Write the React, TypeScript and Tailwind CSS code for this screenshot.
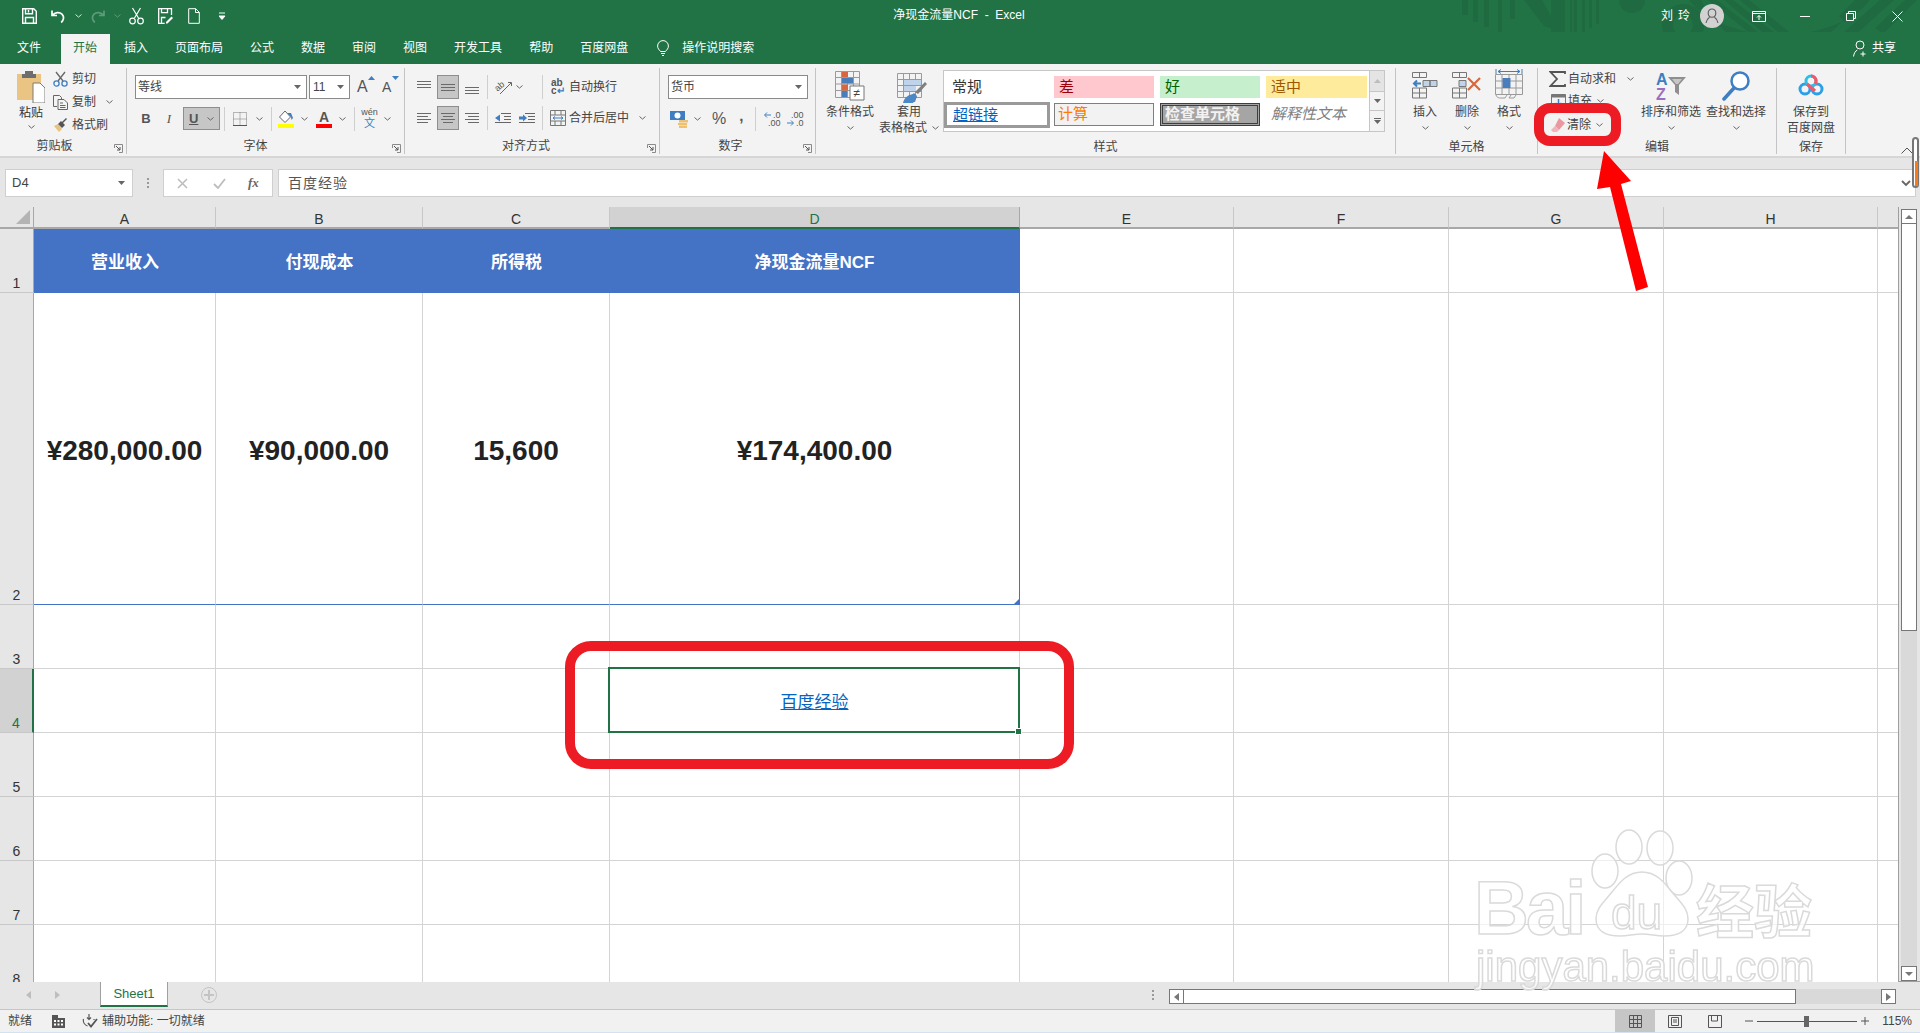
import React from 'react';

const Chev = ({ c = '#666' }: { c?: string }) => (
  <svg width="7" height="4" viewBox="0 0 7 4" className="shrink-0"><path d="M.5.5l3 2.6 3-2.6" fill="none" stroke={c} /></svg>
);

const Caret = () => (
  <svg width="7" height="4" viewBox="0 0 7 4" className="shrink-0"><path d="M0 0h7L3.5 4z" fill="#666" /></svg>
);

const Launcher = () => (
  <svg width="9" height="9" viewBox="0 0 9 9" className="absolute right-[3px] bottom-[1px]">
    <path d="M.5 4V.5h8v8H5" fill="none" stroke="#8a8a8a" />
    <path d="M2 2l4 4M6 3v3H3" fill="none" stroke="#555" />
  </svg>
);

const Sep = ({ cn = '' }: { cn?: string }) => <div className={`w-px h-[24px] bg-[#CFCFCF] shrink-0 ${cn}`} />;

// horizontal line icon for the align buttons
const Lines = ({ ys, short }: { ys: number[]; short?: 'l' | 'r' | 'c' }) => (
  <svg width="14" height="14" viewBox="0 0 14 14" className="shrink-0">
    {ys.map((y, i) => {
      const odd = short && i % 2 === 1;
      const x1 = odd && short === 'r' ? 3 : odd && short === 'c' ? 2 : 0;
      const x2 = odd && short === 'l' ? 11 : odd && short === 'c' ? 12 : 14;
      return <line key={y} x1={x1} x2={x2} y1={y + 0.5} y2={y + 0.5} stroke="#6a6a6a" />;
    })}
  </svg>
);

const Group = ({ w, label, launcher, lp = '', children }: { w: string; label: string; launcher?: boolean; lp?: string; children: React.ReactNode }) => (
  <div className={`relative flex flex-col shrink-0 h-[86px] mt-[4px] border-r border-[#C4C4C4] ${w}`}>
    <div className="h-[70px] relative">{children}</div>
    <div className={`h-[16px] leading-[16px] text-center text-[12px] text-[#444] mt-[3px] ${lp}`}>{label}</div>
    {launcher && <Launcher />}
  </div>
);

const BigBtn = ({ w, icon, lines, chev = true, cn = '' }: { w: string; icon: React.ReactNode; lines: string[]; chev?: boolean; cn?: string }) => (
  <div className={`flex flex-col items-center shrink-0 ${w} ${cn}`}>
    <div className="h-[34px] pt-[3px] flex items-start justify-center">{icon}</div>
    <div className="h-[16px] leading-[16px] text-[12px] text-[#444] whitespace-nowrap mt-[2px]">{lines[0]}</div>
    {lines[1] ? (
      <div className="h-[16px] leading-[16px] text-[12px] text-[#444] whitespace-nowrap">{lines[1]}</div>
    ) : (
      chev && <div className="h-[16px] flex items-center"><Chev /></div>
    )}
  </div>
);

const Combo = ({ w, text }: { w: string; text: string }) => (
  <div className={`h-[24px] bg-white border border-[#8A8A8A] flex items-center justify-between pl-[2px] pr-[5px] text-[12px] text-[#444] shrink-0 ${w}`}>
    <span>{text}</span>
    <Caret />
  </div>
);

const TitleBar = () => (
  <div className="relative h-[32px] bg-[#217346] flex items-center text-white shrink-0">
    <div className="flex items-center pl-[22px]">
      <svg width="15" height="16" viewBox="0 0 15 16"><path d="M.7.7h11l2.6 2.6v12H.7zM3.5.7v5h7v-5M3.5 15.3V9.5h8v5.8M6.5 2v2.5" fill="none" stroke="#fff" strokeWidth="1.4" /></svg>
      <svg width="16" height="15" viewBox="0 0 16 15" className="ml-[13px]"><path d="M2 1.5v5h5M2.3 6.3C5 3 9.5 2.7 12 5.2c2.5 2.6 1.8 6-.8 8.3" fill="none" stroke="#fff" strokeWidth="1.7" /></svg>
      <div className="ml-[9px]"><Chev c="#d6e6dc" /></div>
      <svg width="16" height="15" viewBox="0 0 16 15" className="ml-[8px]"><path d="M14 1.5v5H9M13.7 6.3C11 3 6.5 2.7 4 5.2c-2.5 2.6-1.8 6 .8 8.3" fill="none" stroke="#5f9b7a" strokeWidth="1.7" /></svg>
      <div className="ml-[8px]"><Chev c="#5f9b7a" /></div>
      <svg width="15" height="18" viewBox="0 0 15 18" className="ml-[8px]"><path d="M3.5 1l6 10M11.5 1l-6 10" stroke="#fff" strokeWidth="1.2" /><circle cx="3.5" cy="14" r="2.8" fill="none" stroke="#fff" strokeWidth="1.2" /><circle cx="11.5" cy="14" r="2.8" fill="none" stroke="#fff" strokeWidth="1.2" /></svg>
      <svg width="16" height="16" viewBox="0 0 16 16" className="ml-[14px]"><path d="M13.5 7V.7H.7v14.6h6M3.5.7v4h6v-4M3.5 15V9.5h4" fill="none" stroke="#fff" strokeWidth="1.3" /><path d="M8 14l5.5-5.5 1.5 1.5L9.500 15.500H8z" fill="#fff" /></svg>
      <svg width="12" height="16" viewBox="0 0 12 16" className="ml-[14px]"><path d="M.7.7h7l3.600 3.600v11H.7zM7.500.7v3.800h3.800" fill="none" stroke="#fff" /></svg>
      <svg width="7" height="8" viewBox="0 0 7 8" className="ml-[19px]"><path d="M0 1h6M0 4h6L3 7.500z" stroke="#fff" fill="#fff" /></svg>
    </div>
    <svg width="480" height="64" viewBox="0 0 480 64" className="absolute left-[1440px] top-0 pointer-events-none" fill="#1F6A40">
      <path d="M22 0h6v15h-6zM33 0h5v22h-5zM44 0h5v27h-5zM58 0h4v32h-4zM70 0h5v19h-5zM84 0h18l18 32-16-6zM111 0h14v36h-14zM130 0h2v36h-2zM134 0h3v35h-3zM142 0h3v32h-3zM149 0h3v28h-3zM156 0h3v24h-3z" />
      <circle cx="192" cy="0" r="13" />
      <path d="M243 4a21 21 0 1 0 .1 0zm0 11a10 10 0 1 1-.1 0z" fillRule="evenodd" />
      <path d="M245 0h12a85 85 0 0 0 155 0h14a100 61 0 0 1-181 0z" transform="translate(4 0)" />
      <path d="M268 0h9l56 44-9 0zM284 0h9l56 44-9 3zM300 0h9l50 40-8 3z" />
      <path d="M415 0h12l-22 22-6-6zM440 0h14l-42 38-8-6zM465 0h12l-34 34-8-6z" />
    </svg>
    <div className="absolute left-0 right-0 top-0 h-full flex items-center justify-center text-[12px] pb-[2px]">
      <span className="mr-[2px]">净现金流量NCF&nbsp; -&nbsp; Excel</span>
    </div>
    <div className="absolute right-0 top-0 h-full flex items-center">
      <span className="text-[12px] tracking-[5px] mr-[5px]">刘玲</span>
      <div className="w-[24px] h-[24px] rounded-full bg-[#D2D2D2] flex items-center justify-center">
        <svg width="14" height="16" viewBox="0 0 14 16"><path d="M7 1a3.800 3.800 0 0 1 3.800 4c0 2.300-1.500 4.200-3.800 4.200S3.200 7.300 3.200 5A3.800 3.800 0 0 1 7 1zM1 15c.5-3 2-4.800 3.500-5.800M13 15c-.5-3-2-4.800-3.500-5.800" fill="none" stroke="#5c5c5c" strokeWidth="1.100" /></svg>
      </div>
      <svg width="14" height="11" viewBox="0 0 14 11" className="ml-[28px]"><path d="M.5.5h13v10H.5zM.5 2.500h13M7 9V4.500M5 6.500l2-2 2 2" fill="none" stroke="#fff" /></svg>
      <svg width="10" height="1" viewBox="0 0 10 1" className="ml-[34px]"><path d="M0 .5h10" stroke="#fff" /></svg>
      <svg width="10" height="10" viewBox="0 0 10 10" className="ml-[36px]"><path d="M.5 2.500h7v7h-7zM2.500 2.500v-2h7v7h-2" fill="none" stroke="#fff" /></svg>
      <svg width="11" height="11" viewBox="0 0 11 11" className="ml-[36px] mr-[17px]"><path d="M.5.5l10 10M10.500.5l-10 10" stroke="#fff" /></svg>
    </div>
  </div>
);

const tabs = ['插入', '页面布局', '公式', '数据', '审阅', '视图', '开发工具', '帮助', '百度网盘'];

const TabBar = () => (
  <div className="relative h-[32px] bg-[#217346] flex items-end text-[12px] text-white shrink-0 pl-[5px]">
    <div className="h-full px-[12px] flex items-center">文件</div>
    <div className="h-[30px] ml-[8px] px-[12px] bg-[#F3F3F3] text-[#217346] flex items-center w-[49px] pb-[2px]">开始</div>
    <div className="flex h-full items-center ml-[2px] gap-[3px]">
      {tabs.map(t => <div key={t} className="px-[12px]">{t}</div>)}
    </div>
    <div className="flex h-full items-center ml-[17px]">
      <svg width="12" height="16" viewBox="0 0 12 16"><path d="M3.500 11.500C2 9.500.6 8.500.6 6a5.400 5.400 0 0 1 10.800 0c0 2.500-1.400 3.500-2.900 5.500zM4 13.500h4M5 15.500h2" fill="none" stroke="#fff" /></svg>
      <span className="ml-[13px]">操作说明搜索</span>
    </div>
    <div className="absolute right-[24px] top-0 h-full flex items-center">
      <svg width="14" height="17" viewBox="0 0 14 17"><circle cx="7" cy="5" r="4" fill="none" stroke="#fff" /><path d="M.5 16.500c.5-3.500 2-5.500 3.800-6.500M10 11.500v5M7.500 14h5" fill="none" stroke="#fff" /></svg>
      <span className="ml-[5px]">共享</span>
    </div>
  </div>
);

const Ribbon = () => (
  <div className="h-[94px] bg-[#F3F3F3] flex shrink-0 border-b-2 border-[#D6D6D6] overflow-hidden">
    <Group w="w-[127px]" label="剪贴板" launcher lp="pr-[17px]">
      <div className="flex">
        <div className="ml-[17px] w-[28px] flex flex-col items-center">
          <svg width="28" height="32" viewBox="0 0 28 32" className="mt-[3px]">
            <path d="M0 3h24v26H0z" fill="#EAC482" />
            <path d="M8 0h8v3h3v4H5V3h3z" fill="#6e6e6e" />
            <path d="M16 12h7l5 5v15H16z" fill="#fff" stroke="#7a7a7a" />
          </svg>
          <div className="text-[12px] leading-[16px] text-[#333] whitespace-nowrap mt-[2px]">粘贴</div>
          <div className="h-[12px] flex items-center"><Chev /></div>
        </div>
        <div className="ml-[8px] mt-[3px] flex flex-col gap-[7px] text-[12px] text-[#444]">
          <div className="h-[16px] flex items-center">
            <svg width="15" height="16" viewBox="0 0 15 16"><path d="M3 1l7 9M12 1l-7 9" stroke="#666" strokeWidth="1.300" /><circle cx="3.500" cy="12.500" r="2.600" fill="none" stroke="#3E7EC2" strokeWidth="1.300" /><circle cx="11.500" cy="12.500" r="2.600" fill="none" stroke="#3E7EC2" strokeWidth="1.300" /></svg>
            <span className="ml-[4px]">剪切</span>
          </div>
          <div className="h-[16px] flex items-center">
            <svg width="15" height="15" viewBox="0 0 15 15"><path d="M.5.500h6l2 2v2M.5.500v11h3.500M5 4.500h6l3.500 3.500v6.500H5zM7 8h3M7 10.500h5.500M7 12.500h5.500" fill="none" stroke="#666" /></svg>
            <span className="ml-[4px]">复制</span>
            <div className="ml-[10px]"><Chev /></div>
          </div>
          <div className="h-[16px] flex items-center">
            <svg width="15" height="15" viewBox="0 0 15 15"><path d="M1 8l5 6 3-3-4-5z" fill="#E8C27E" /><path d="M5 6l4 4 3-3-2-2 4-4-1-1-4 4-1-1z" fill="#555" /></svg>
            <span className="ml-[4px]">格式刷</span>
          </div>
        </div>
      </div>
    </Group>

    <Group w="w-[278px]" label="字体" launcher lp="pr-[20px]">
      <div className="flex items-center pl-[8px] pt-[7px]">
        <Combo w="w-[172px]" text="等线" />
        <div className="ml-[2px]"><Combo w="w-[41px] !pl-[3px]" text="11" /></div>
        <div className="ml-[7px] relative w-[20px] text-[16px] leading-[24px] text-[#555]">A<svg width="7" height="4" viewBox="0 0 7 4" className="absolute right-[2px] top-[1px]"><path d="M0 4h7L3.500 0z" fill="#3E7EC2" /></svg></div>
        <div className="ml-[5px] relative w-[16px] text-[14px] leading-[24px] text-[#555]">A<svg width="7" height="4" viewBox="0 0 7 4" className="absolute right-[-1px] top-[1px]"><path d="M0 0h7L3.500 4z" fill="#3E7EC2" /></svg></div>
      </div>
      <div className="flex items-center pl-[8px] mt-[8px] h-[23px] text-[#555]">
        <span className="w-[22px] text-center font-bold text-[13px]">B</span>
        <span className="w-[24px] text-center italic text-[13px] font-['Liberation_Serif',serif]">I</span>
        <div className="ml-[2px] w-[37px] h-[23px] bg-[#C6C6C6] border border-[#8E8E8E] flex items-center pl-[5px]">
          <span className="font-bold text-[13px] underline">U</span>
          <div className="ml-[9px]"><Chev /></div>
        </div>
        <Sep cn="ml-[4px]" />
        <svg width="14" height="14" viewBox="0 0 14 14" className="ml-[8px]"><path d="M.5.500h13v13H.5zM7 .500v13M.5 7h13" fill="none" stroke="#777" strokeDasharray="1 1" /><path d="M0 13.500h14" stroke="#555" /></svg>
        <div className="ml-[9px]"><Chev /></div>
        <Sep cn="ml-[8px]" />
        <div className="ml-[6px] w-[16px] flex flex-col items-center">
          <svg width="16" height="14" viewBox="0 0 16 14"><path d="M7 1L1.500 7 7 12.500 12.500 7z" fill="#fff" stroke="#666" /><path d="M9 3l4 4 .5 3 1.500-2-2-5z" fill="#3E7EC2" /></svg>
          <div className="w-[16px] h-[4px] bg-[#FFFF00]" />
        </div>
        <div className="ml-[7px]"><Chev /></div>
        <div className="ml-[8px] w-[16px] flex flex-col items-center leading-none">
          <span className="text-[14px] h-[14px] leading-[14px] font-bold">A</span>
          <div className="w-[16px] h-[4px] bg-[#FF0000]" />
        </div>
        <div className="ml-[7px]"><Chev /></div>
        <Sep cn="ml-[8px]" />
        <div className="ml-[6px] w-[17px] flex flex-col items-center leading-none">
          <span className="text-[9px] leading-[9px] text-[#555]">wén</span>
          <span className="text-[11px] leading-[12px] text-[#3E7EC2]">文</span>
        </div>
        <div className="ml-[6px]"><Chev /></div>
      </div>
    </Group>

    <Group w="w-[255px]" label="对齐方式" launcher lp="pr-[12px]">
      <div className="flex items-center pl-[12px] pt-[7px] h-[31px]">
        <Lines ys={[1, 4, 7]} />
        <div className="ml-[6px] w-[22px] h-[24px] bg-[#C6C6C6] border border-[#8E8E8E] flex items-center justify-center"><Lines ys={[4, 7, 10]} /></div>
        <div className="ml-[6px]"><Lines ys={[7, 10, 13]} /></div>
        <Sep cn="ml-[8px]" />
        <svg width="18" height="17" viewBox="0 0 18 17" className="ml-[7px] overflow-visible"><text x="0" y="10" fontSize="9" fill="#555" transform="rotate(-40 5 8)">ab</text><path d="M5 15L16 4M13 3.500h3.500V7" fill="none" stroke="#666" /></svg>
        <div className="ml-[3px]"><Chev /></div>
        <Sep cn="ml-[19px]" />
        <div className="ml-[8px] flex items-center text-[12px] text-[#444]">
          <div className="w-[14px] text-[10px] leading-[8px] text-[#555] font-bold">ab<br />c<span className="text-[#3E7EC2]">↵</span></div>
          <span className="ml-[4px]">自动换行</span>
        </div>
      </div>
      <div className="flex items-center pl-[12px] mt-[7px] h-[24px]">
        <Lines ys={[2, 5, 8, 11]} short="l" />
        <div className="ml-[6px] w-[22px] h-[24px] bg-[#C6C6C6] border border-[#8E8E8E] flex items-center justify-center"><Lines ys={[2, 5, 8, 11]} short="c" /></div>
        <div className="ml-[6px]"><Lines ys={[2, 5, 8, 11]} short="r" /></div>
        <Sep cn="ml-[8px]" />
        <svg width="16" height="14" viewBox="0 0 16 14" className="ml-[7px]"><path d="M6 2.500h10M9 5.500h7M9 8.500h7M0 11.500h16" stroke="#666" /><path d="M0 7l5-3.500v7z" fill="#3E7EC2" /></svg>
        <svg width="16" height="14" viewBox="0 0 16 14" className="ml-[8px]"><path d="M6 2.500h10M9 5.500h7M9 8.500h7M0 11.500h16" stroke="#666" /><path d="M0 5.500h4V3.500l4 3.500-4 3.500V8.500H0z" fill="#3E7EC2" /></svg>
        <Sep cn="ml-[7px]" />
        <div className="ml-[7px] flex items-center text-[12px] text-[#444]">
          <svg width="16" height="16" viewBox="0 0 16 16"><path d="M.5.500h15v15H.5zM.5 5h15M.5 11h15M5 .500V5M11 .500V5M5 11v4.500M11 11v4.500" fill="none" stroke="#777" /><path d="M3 8h10M3 8l2-1.500M3 8l2 1.500M13 8l-2-1.500M13 8l-2 1.500" fill="none" stroke="#3E7EC2" /></svg>
          <span className="ml-[3px]">合并后居中</span>
          <div className="ml-[10px]"><Chev /></div>
        </div>
      </div>
    </Group>

    <Group w="w-[156px]" label="数字" launcher lp="pr-[14px]">
      <div className="pl-[8px] pt-[7px]"><Combo w="w-[140px]" text="货币" /></div>
      <div className="flex items-center pl-[10px] mt-[8px] h-[23px] text-[#555]">
        <svg width="19" height="18" viewBox="0 0 19 18"><path d="M0 1h15v9H0z" fill="#3E7EC2" /><circle cx="7.500" cy="5.500" r="3" fill="#fff" /><path d="M9 10h9v2.500H9zM8 13h9v2H8zM9 15.500h8V18H9z" fill="#EFC06E" /></svg>
        <div className="ml-[5px]"><Chev /></div>
        <span className="ml-[11px] text-[16px] leading-none">%</span>
        <span className="ml-[13px] text-[15px] leading-none font-bold -mt-[6px]">,</span>
        <Sep cn="ml-[12px]" />
        <div className="ml-[8px] w-[16px] text-[9px] leading-[8px] text-right relative"><svg width="7" height="6" viewBox="0 0 7 6" className="absolute left-0 top-[1px]"><path d="M7 3H1M3 .500L.5 3 3 5.500" fill="none" stroke="#3E7EC2" /></svg>.0<br />.00</div>
        <div className="ml-[7px] w-[16px] text-[9px] leading-[8px] text-right relative">.00<br />.0<svg width="7" height="6" viewBox="0 0 7 6" className="absolute left-0 top-[9px]"><path d="M0 3h6M4 .500L6.500 3 4 5.500" fill="none" stroke="#3E7EC2" /></svg></div>
      </div>
    </Group>

    <Group w="w-[580px]" label="样式">
      <div className="flex">
        <BigBtn
          w="w-[48px]"
          cn="ml-[10px]"
          icon={
            <svg width="30" height="31" viewBox="0 0 30 31">
              <path d="M.5.500h24v26H.5zM6.500.500v26M12.500.500v26M18.500.500v26M.5 6.500h24M.5 13h24M.5 19.500h24" fill="none" stroke="#9a9a9a" />
              <path d="M7 1h6v5H7zM7 13.500h6v6H7z" fill="#D9663D" />
              <path d="M7 7h11v5.500H7zM7 20h5v6H7z" fill="#4A7EBB" />
              <path d="M15 15h14v14H15z" fill="#fff" stroke="#777" />
              <text x="18.500" y="26" fontSize="12" fill="#444">≠</text>
            </svg>
          }
          lines={['条件格式']}
        />
        <div className="ml-[5px] w-[56px] relative">
          <div className="w-[48px] flex flex-col">
            <div className="h-[34px] pt-[5px] pl-[18px]">
              <svg width="30" height="30" viewBox="0 0 30 30">
                <path d="M.5.500h24v24H.5zM6.500.500v24M12.500.500v24M18.500.500v24M.5 6.500h24M.5 12.500h24M.5 18.500h24" fill="none" stroke="#9a9a9a" />
                <path d="M7 7h17v5H7zM7 13h12v5H7z" fill="#BFD3EA" />
                <path d="M28 9l2 2-9 10-3-2zM17 20l3 3-2 6H7z" fill="#7f7f7f" />
                <path d="M6 30c1-5 5-9 12-9l2 3-4 6z" fill="#4A88C7" />
              </svg>
            </div>
            <div className="h-[16px] leading-[16px] text-[12px] text-[#444] whitespace-nowrap mt-[2px] pl-[18px]">套用</div>
            <div className="h-[16px] leading-[16px] text-[12px] text-[#444] whitespace-nowrap">表格格式</div>
          </div>
          <div className="absolute left-[53px] top-[58px]"><Chev /></div>
        </div>
        <div className="ml-[8px] mt-[2px] w-[442px] h-[62px] flex border border-[#C6C6C6]">
          <div className="flex-1 bg-white grid grid-cols-[108px_106px_106px_103px] grid-rows-[28px_32px] text-[15px] pt-[1px]">
            <div className="mt-[4px] mr-[4px] h-[22px] pl-[8px] flex items-center text-[#333]">常规</div>
            <div className="mt-[4px] mr-[4px] ml-[2px] h-[22px] pl-[5px] flex items-center bg-[#FFC7CE] text-[#9C0006]">差</div>
            <div className="mt-[4px] mr-[4px] ml-[2px] h-[22px] pl-[5px] flex items-center bg-[#C6EFCE] text-[#006100]">好</div>
            <div className="mt-[4px] ml-[2px] h-[22px] pl-[5px] flex items-center bg-[#FFEB9C] text-[#9C5700]">适中</div>
            <div className="mt-[2px] mr-[2px] h-[26px] pl-[6px] flex items-center bg-white border-[3px] border-[#9A9A9A] outline-none text-[#0563C1] underline">超链接</div>
            <div className="mt-[3px] mr-[4px] ml-[2px] h-[23px] pl-[3px] flex items-center bg-[#F2F2F2] border border-[#7F7F7F] text-[#FA7D00]">计算</div>
            <div className="mt-[3px] mr-[4px] ml-[2px] h-[23px] pl-[2px] flex items-center bg-[#A5A5A5] border-[3px] border-double border-[#3F3F3F] text-[#F2F2F2] font-bold whitespace-nowrap">检查单元格</div>
            <div className="mt-[3px] ml-[2px] h-[23px] pl-[5px] flex items-center italic text-[#7F7F7F] whitespace-nowrap">解释性文本</div>
          </div>
          <div className="w-[15px] flex flex-col border-l border-[#C6C6C6] bg-[#F3F3F3]">
            <div className="h-[21px] bg-[#E4E4E4] flex items-center justify-center border-b border-[#C6C6C6]"><svg width="7" height="4" viewBox="0 0 7 4"><path d="M0 4h7L3.500 0z" fill="#BDBDBD" /></svg></div>
            <div className="h-[19px] flex items-center justify-center border-b border-[#C6C6C6]"><Caret /></div>
            <div className="flex-1 flex flex-col gap-[1px] items-center justify-center"><div className="w-[7px] h-px bg-[#666]" /><Caret /></div>
          </div>
        </div>
      </div>
    </Group>

    <Group w="w-[142px]" label="单元格">
      <div className="flex pl-[8px]">
        <BigBtn w="w-[42px]" lines={['插入']} icon={
          <svg width="26" height="28" viewBox="0 0 26 28"><path d="M.5 1.500h14v5H.5zM7.500 1.500v5M.5 17h14v10H.5zM.5 22h14M7.500 17v10" fill="none" stroke="#777" /><path d="M11 9.500h7v6h-7zM18 9.500h7v6h-7z" fill="#BFD3EA" stroke="#777" /><path d="M9 12.500H2M5 9.500l-3 3 3 3" fill="none" stroke="#3E7EC2" strokeWidth="2" /></svg>
        } />
        <BigBtn w="w-[42px]" lines={['删除']} icon={
          <svg width="30" height="28" viewBox="0 0 30 28"><path d="M.5 1.500h14v5H.5zM7.500 1.500v5M.5 17h14v10H.5zM.5 22h14M7.500 17v10" fill="none" stroke="#777" /><path d="M7 9.500h7v6H7z" fill="#BFD3EA" stroke="#777" /><path d="M16 7l12 12M28 7L16 19" stroke="#D9663D" strokeWidth="2.200" /></svg>
        } />
        <BigBtn w="w-[42px]" lines={['格式']} icon={
          <svg width="28" height="31" viewBox="0 0 28 31" className="-mt-[2px]"><path d="M1 0v5M27 0v5M3 2.500h22M3 2.500l3-2M3 2.500l3 2M25 2.500l-3-2M25 2.500l-3 2" fill="none" stroke="#3E7EC2" /><path d="M.5 5.500h27v20H.5zM7 5.500v20M21 5.500v20M14 5.500v20M.5 12h27M.5 19h27M1 26c1 3 3 3 5 3h4l2-3M16 26l-2 3h5l2-3" fill="none" stroke="#9a9a9a" /><path d="M7.500 9h8v10h-8z" fill="#4A7EBB" /></svg>
        } />
      </div>
    </Group>

    <Group w="w-[239px]" label="编辑">
      <div className="flex">
        <div className="ml-[11px] w-[92px] mt-[3px] flex flex-col gap-[6px] text-[12px] text-[#444]">
          <div className="h-[16px] flex items-center">
            <svg width="17" height="16" viewBox="0 0 17 16"><path d="M16 3V1H1.500l6.500 7-6.500 7H16v-2" fill="none" stroke="#555" strokeWidth="1.800" /></svg>
            <span className="ml-[2px]">自动求和</span>
            <div className="ml-[11px]"><Chev /></div>
          </div>
          <div className="h-[16px] flex items-center ml-[2px]">
            <svg width="15" height="15" viewBox="0 0 15 15"><path d="M.5.500h14v14H.5z" fill="none" stroke="#777" /><path d="M.5.500h14v3H.5z" fill="#777" /><path d="M7.500 5v7M4.500 9l3 3 3-3" fill="none" stroke="#3E7EC2" strokeWidth="1.500" /></svg>
            <span className="ml-[2px]">填充</span>
            <div className="ml-[5px]"><Chev /></div>
          </div>
          <div className="h-[16px] flex items-center ml-[1px] mt-[2px]">
            <svg width="15" height="14" viewBox="0 0 15 14"><path d="M9 0l6 5-6 7-4-4z" fill="#EC96A0" /><path d="M5 8l4 4-2 2H3L1 12z" fill="#F0B4BA" /></svg>
            <span className="ml-[2px]">清除</span>
            <div className="ml-[5px]"><Chev /></div>
          </div>
        </div>
        <BigBtn w="w-[60px]" lines={['排序和筛选']} icon={
          <div className="relative w-[30px] h-[30px]">
            <span className="absolute left-0 top-[-3px] text-[16px] font-bold text-[#3E7EC2]">A</span>
            <span className="absolute left-0 top-[12px] text-[16px] font-bold text-[#9B6FBE]">Z</span>
            <svg width="18" height="19" viewBox="0 0 18 19" className="absolute right-0 top-[6px]"><path d="M0 0h18l-7 8v10l-4-3V8z" fill="#8F8F8F" /><path d="M4 2h10l-4 5H8z" fill="#fff" opacity=".5" /></svg>
          </div>
        } cn="mr-[5px]" />
        <BigBtn w="w-[60px]" lines={['查找和选择']} icon={
          <svg width="28" height="30" viewBox="0 0 28 30"><circle cx="18" cy="10" r="8.500" fill="#fff" stroke="#3E7EC2" strokeWidth="2.500" /><path d="M12 17L2 28" stroke="#3E7EC2" strokeWidth="3.500" strokeLinecap="round" /></svg>
        } />
      </div>
    </Group>

    <Group w="w-[69px]" label="保存">
      <div className="flex justify-center">
        <BigBtn w="w-[60px]" lines={['保存到', '百度网盘']} icon={
          <svg width="26" height="23" viewBox="0 0 26 23" className="mt-[3px]"><circle cx="7" cy="15" r="5" fill="none" stroke="#2BA0E8" strokeWidth="3" /><circle cx="19" cy="15" r="5" fill="none" stroke="#2BA0E8" strokeWidth="3" /><circle cx="13" cy="7" r="5" fill="none" stroke="#2BC0E8" strokeWidth="3" /><path d="M9 10l8 7" stroke="#F0596B" strokeWidth="3.200" /><path d="M17 10a5 5 0 0 0-4-8" fill="none" stroke="#F0596B" strokeWidth="3" /></svg>
        } />
      </div>
    </Group>
    <div className="flex-1 relative">
      <svg width="12" height="7" viewBox="0 0 12 7" className="absolute left-[55px] top-[83px]"><path d="M.5 6.500L6 1l5.500 5.500" fill="none" stroke="#555" /></svg>
    </div>
  </div>
);

const FormulaBar = () => (
  <div className="h-[49px] bg-[#E6E6E6] shrink-0 pt-[11px] flex items-start pl-[5px] relative">
    <div className="w-[128px] h-[28px] bg-white border border-[#CFCFCF] flex items-center justify-between pl-[6px] pr-[7px] text-[13px] text-[#444]">
      <span>D4</span><Caret />
    </div>
    <div className="w-[30px] h-[28px] flex flex-col items-center justify-center gap-[2px]">
      <div className="w-[2px] h-[2px] bg-[#999]" /><div className="w-[2px] h-[2px] bg-[#999]" /><div className="w-[2px] h-[2px] bg-[#999]" />
    </div>
    <div className="w-[110px] h-[28px] bg-white border border-[#CFCFCF] flex items-center">
      <svg width="11" height="11" viewBox="0 0 11 11" className="ml-[13px]"><path d="M1 1l9 9M10 1l-9 9" stroke="#BDBDBD" strokeWidth="1.600" /></svg>
      <svg width="13" height="11" viewBox="0 0 13 11" className="ml-[25px]"><path d="M1 6l4 4 7-9" fill="none" stroke="#BDBDBD" strokeWidth="1.800" /></svg>
      <span className="ml-[22px] text-[13px] italic font-bold font-['Liberation_Serif',serif] text-[#666]">fx</span>
    </div>
    <div className="ml-[5px] w-[1638px] h-[28px] bg-white border border-[#CFCFCF] flex items-center pl-[9px] text-[14px] tracking-[1px] text-[#555] relative">
      百度经验
      <svg width="10" height="7" viewBox="0 0 10 7" className="absolute right-[4px] top-[10px]"><path d="M1 1l4 4 4-4" fill="none" stroke="#666" strokeWidth="1.800" /></svg>
    </div>
  </div>
);

const cols = ['A', 'B', 'C', 'D', 'E', 'F', 'G', 'H'];
const head = ['营业收入', '付现成本', '所得税', '净现金流量NCF'];
const data = ['¥280,000.00', '¥90,000.00', '15,600', '¥174,400.00'];
const rows = [1, 2, 3, 4, 5, 6, 7, 8];

const Sheet = () => (
  <div className="h-[775px] shrink-0 flex overflow-hidden">
    <div className="w-[1899px] h-full overflow-hidden border-r border-[#9F9F9F] grid grid-cols-[34px_182px_207px_187px_410px_214px_215px_215px_214px_20px] grid-rows-[22px_64px_312px_64px_64px_64px_64px_64px_64px]">
      <div className="bg-[#E6E6E6] border-r border-b-2 border-[#A8A8A8] flex items-end justify-end pr-[3px] pb-[3px]">
        <svg width="14" height="14" viewBox="0 0 14 14"><path d="M14 0v14H0z" fill="#B4B4B4" /></svg>
      </div>
      {cols.map(c => (
        <div
          key={c}
          className={c === 'D'
            ? 'bg-[#D2D2D2] border-r border-[#A8A8A8] border-b-2 border-b-[#217346] text-[#217346] text-center text-[14px] leading-[24px]'
            : 'bg-[#E6E6E6] border-r border-[#C8C8C8] border-b-2 border-b-[#A8A8A8] text-[#333] text-center text-[14px] leading-[24px]'}
        >
          {c}
        </div>
      ))}
      <div className="bg-[#E6E6E6] border-b-2 border-[#A8A8A8]" />

      {rows.map(r => (
        <React.Fragment key={r}>
          <div
            className={r === 4
              ? 'bg-[#D2D2D2] border-b border-[#C8C8C8] border-r-2 border-r-[#217346] text-[#217346] text-[14px] flex items-end justify-center leading-[18px]'
              : 'bg-[#E6E6E6] border-b border-[#C8C8C8] border-r border-r-[#A8A8A8] text-[#333] text-[14px] flex items-end justify-center leading-[18px]'}
          >
            {r}
          </div>
          {cols.map((c, i) => {
            if (r === 1 && i < 4) {
              return (
                <div key={c} className={`bg-[#4472C4] text-white font-bold text-[17px] pt-[3px] flex items-center justify-center ${i === 3 ? 'border-r border-[#4472C4]' : ''}`}>
                  {head[i]}
                </div>
              );
            }
            if (r === 2 && i < 4) {
              return (
                <div key={c} className={`relative border-b border-b-[#4472C4] border-r font-bold text-[28px] text-[#222] pt-[4px] flex items-center justify-center font-['Liberation_Sans',sans-serif] ${i === 3 ? 'border-r-[#4472C4]' : 'border-r-[#D4D4D4]'}`}>
                  {data[i]}
                  {i === 3 && <svg width="5" height="5" viewBox="0 0 5 5" className="absolute right-0 bottom-0"><path d="M5 0v5H0z" fill="#4472C4" /></svg>}
                </div>
              );
            }
            if (r === 4 && c === 'D') {
              return (
                <div key={c} className="relative border-r border-b border-[#D4D4D4] pt-[4px] flex items-center justify-center text-[17px] text-[#0563C1] underline">
                  百度经验
                  <div className="absolute -left-[2px] -top-[2px] -right-[1px] -bottom-[1px] border-2 border-[#217346]" />
                  <div className="absolute -right-[2px] -bottom-[2px] w-[5px] h-[5px] bg-[#217346] outline outline-1 outline-white" />
                </div>
              );
            }
            return <div key={c} className="border-r border-b border-[#D4D4D4]" />;
          })}
          <div className="border-b border-[#D4D4D4]" />
        </React.Fragment>
      ))}
    </div>
    <div className="flex-1 bg-[#E6E6E6] border-b border-[#9F9F9F] pl-[2px] pr-[3px] pt-[2px] flex flex-col">
      <div className="h-[15px] bg-white border border-[#777] flex items-center justify-center">
        <svg width="8" height="4" viewBox="0 0 8 4"><path d="M0 4h8L4 0z" fill="#777" /></svg>
      </div>
      <div className="h-[408px] bg-white border border-[#777] -mt-px" />
      <div className="flex-1 bg-[#D9D9D9]" />
      <div className="h-[15px] bg-white border border-[#777] flex items-center justify-center">
        <svg width="8" height="4" viewBox="0 0 8 4"><path d="M0 0h8L4 4z" fill="#777" /></svg>
      </div>
    </div>
  </div>
);

const SheetTabs = () => (
  <div className="h-[28px] bg-[#E6E6E6] shrink-0 flex items-start border-b border-[#C6C6C6]">
    <div className="w-[100px] h-[25px] flex items-center pl-[26px]">
      <svg width="6" height="8" viewBox="0 0 6 8"><path d="M5 0v8L0 4z" fill="#BDBDBD" /></svg>
      <svg width="6" height="8" viewBox="0 0 6 8" className="ml-[23px]"><path d="M0 0v8l5-4z" fill="#BDBDBD" /></svg>
    </div>
    <div className="w-[68px] h-[25px] bg-white border-x border-[#A0A0A0] border-b-2 border-b-[#217346] text-[#217346] text-[13px] flex items-center justify-center">Sheet1</div>
    <div className="ml-[33px] mt-[5px] w-[16px] h-[16px] rounded-full border border-[#C4C4C4] flex items-center justify-center text-[#C4C4C4]">
      <svg width="10" height="10" viewBox="0 0 10 10"><path d="M5 0v10M0 5h10" stroke="#C4C4C4" strokeWidth="2" /></svg>
    </div>
    <div className="ml-[935px] mt-[8px] flex flex-col gap-[2px] w-[2px]">
      <div className="w-[2px] h-[2px] bg-[#999]" /><div className="w-[2px] h-[2px] bg-[#999]" /><div className="w-[2px] h-[2px] bg-[#999]" />
    </div>
    <div className="ml-[15px] mt-[7px] flex h-[15px]">
      <div className="w-[15px] bg-white border border-[#777] flex items-center justify-center"><svg width="5" height="8" viewBox="0 0 5 8"><path d="M5 0v8L0 4z" fill="#777" /></svg></div>
      <div className="w-[612px] bg-white border-y border-r border-[#777]" />
      <div className="w-[85px] bg-[#D9D9D9]" />
      <div className="w-[15px] bg-white border border-[#777] flex items-center justify-center"><svg width="5" height="8" viewBox="0 0 5 8"><path d="M0 0v8l5-4z" fill="#777" /></svg></div>
    </div>
  </div>
);

const StatusBar = () => (
  <div className="h-[23px] bg-[#F1F1F1] shrink-0 flex items-center text-[12px] text-[#444] border-b border-[#D3E2F1]">
    <span className="ml-[8px]">就绪</span>
    <svg width="13" height="13" viewBox="0 0 13 13" className="ml-[20px]"><path d="M0 0h6v3h7v10H0z" fill="#555" /><path d="M2 5h2v2H2zM5.500 5h2v2h-2zM9 5h2v2H9zM2 8.500h2v2H2zM5.500 8.500h2v2h-2zM9 8.500h2v2H9z" fill="#fff" /></svg>
    <svg width="16" height="14" viewBox="0 0 16 14" className="ml-[17px]"><path d="M1.500 5a6 6 0 0 0 4 7M7 0v5M5 3.500l2 2 2-2M12 5v1" fill="none" stroke="#555" strokeWidth="1.200" /><path d="M6 9l3 3.500L15 5" fill="none" stroke="#555" strokeWidth="1.800" /></svg>
    <span className="ml-[4px]">辅助功能: 一切就绪</span>
    <div className="ml-auto h-full flex items-center">
      <div className="w-[40px] h-full bg-[#C6C6C6] flex items-center justify-center">
        <svg width="13" height="13" viewBox="0 0 13 13"><path d="M.5.500h12v12H.5zM4.500.500v12M8.500.500v12M.5 4.500h12M.5 8.500h12" fill="none" stroke="#555" /></svg>
      </div>
      <div className="w-[40px] flex justify-center">
        <svg width="14" height="13" viewBox="0 0 14 13"><path d="M.5.500h13v12H.5zM3.500 2.500h7v8h-7zM5 5h4M5 7h4" fill="none" stroke="#555" /></svg>
      </div>
      <div className="w-[40px] flex justify-center">
        <svg width="14" height="13" viewBox="0 0 14 13"><path d="M.5.500h13v12H.5zM3.500.500V6h6V.500" fill="none" stroke="#555" /></svg>
      </div>
      <svg width="8" height="2" viewBox="0 0 8 2" className="ml-[10px]"><path d="M0 1h8" stroke="#555" /></svg>
      <div className="ml-[4px] w-[100px] h-[9px] relative flex items-center">
        <div className="w-full h-px bg-[#555]" />
        <div className="absolute left-[47px] w-[5px] h-[11px] -top-px bg-[#666]" />
      </div>
      <svg width="8" height="8" viewBox="0 0 8 8" className="ml-[4px]"><path d="M4 0v8M0 4h8" stroke="#555" /></svg>
      <span className="ml-[13px] mr-[8px] text-[12px]">115%</span>
    </div>
  </div>
);

export default function App() {
  return (
    <div className="relative w-[1920px] h-[1033px] overflow-hidden bg-white flex flex-col font-['Liberation_Sans','Noto_Sans_CJK_SC',sans-serif]">
      <TitleBar />
      <TabBar />
      <Ribbon />
      <FormulaBar />
      <Sheet />
      <SheetTabs />
      <StatusBar />

      {/* grey scroll thing on the right edge */}
      <div className="absolute left-[1912px] top-[137px] w-[7px] h-[51px] rounded-[4px] border-2 border-[#777] bg-white pt-[22px] pl-px">
        <div className="w-[3px] h-[25px] bg-[#F47B20]" />
      </div>

      {/* red marks */}
      <div className="absolute left-[1534px] top-[103px] w-[87px] h-[43px] border-[10px] border-[#ED1C24] rounded-[16px]" />
      <div className="absolute left-[565px] top-[641px] w-[509px] h-[128px] border-[10px] border-[#ED1C24] rounded-[26px]" />
      <svg width="60" height="145" viewBox="0 0 60 145" className="absolute left-[1592px] top-[150px]">
        <path d="M12 1l27 30-10 3 27 103-12 4-26-104-13 2z" fill="#FF0000" />
      </svg>

      {/* watermark */}
      <div className="absolute left-[1474px] top-[838px] w-[350px] h-[160px] pointer-events-none text-white/70 [-webkit-text-stroke:1.5px_#DADADA] blur-[0.4px]">
        <svg width="350" height="160" viewBox="0 0 350 160" className="absolute left-0 top-0 overflow-visible">
          <g fill="#fff" fillOpacity=".6" stroke="#DADADA" strokeWidth="1.500">
            <ellipse cx="131" cy="33" rx="13" ry="17" />
            <ellipse cx="155" cy="9" rx="13" ry="17" />
            <ellipse cx="186" cy="10" rx="13" ry="17" />
            <ellipse cx="205" cy="40" rx="13" ry="17" />
            <path d="M168 34c-14 0-22 10-30 20-8 10-16 16-16 27 0 12 10 17 24 17 8 0 14-2 22-2s14 2 22 2c14 0 24-5 24-17 0-11-8-17-16-27-8-10-16-20-30-20z" />
          </g>
        </svg>
        <span className="absolute left-[0px] top-[28px] text-[76px] leading-[84px] font-bold tracking-[-3px]">Bai</span>
        <span className="absolute left-[137px] top-[48px] text-[46px] leading-[54px]">du</span>
        <span className="absolute left-[222px] top-[38px] text-[58px] leading-[64px] font-bold font-['Noto_Sans_CJK_SC',sans-serif]">经验</span>
        <span className="absolute left-[2px] top-[104px] text-[42px] leading-[50px]">jingyan.baidu.com</span>
      </div>
    </div>
  );
}
